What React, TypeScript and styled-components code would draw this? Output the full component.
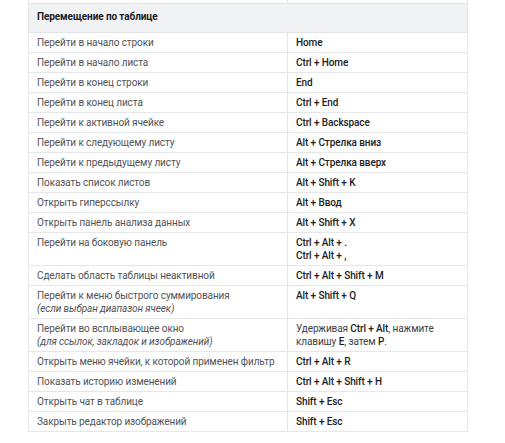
import * as React from "react";
import styled, { createGlobalStyle } from "styled-components";

const GlobalStyle = createGlobalStyle`
  html, body {
    margin: 0;
    padding: 0;
    background: #ffffff;
  }
  body {
    font-family: Roboto, "Liberation Sans", Arial, sans-serif;
  }
`;

type Part = { text: string; bold?: boolean };

interface IRow {
  action: string;
  note?: string;
  keys: Part[][];
}

const rows: IRow[] = [
  { action: "Перейти в начало строки", keys: [[{ text: "Home", bold: true }]] },
  { action: "Перейти в начало листа", keys: [[{ text: "Ctrl + Home", bold: true }]] },
  { action: "Перейти в конец строки", keys: [[{ text: "End", bold: true }]] },
  { action: "Перейти в конец листа", keys: [[{ text: "Ctrl + End", bold: true }]] },
  { action: "Перейти к активной ячейке", keys: [[{ text: "Ctrl + Backspace", bold: true }]] },
  { action: "Перейти к следующему листу", keys: [[{ text: "Alt + Стрелка вниз", bold: true }]] },
  { action: "Перейти к предыдущему листу", keys: [[{ text: "Alt + Стрелка вверх", bold: true }]] },
  { action: "Показать список листов", keys: [[{ text: "Alt + Shift + K", bold: true }]] },
  { action: "Открыть гиперссылку", keys: [[{ text: "Alt + Ввод", bold: true }]] },
  { action: "Открыть панель анализа данных", keys: [[{ text: "Alt + Shift + X", bold: true }]] },
  {
    action: "Перейти на боковую панель",
    keys: [[{ text: "Ctrl + Alt + .", bold: true }], [{ text: "Ctrl + Alt + ,", bold: true }]]
  },
  { action: "Сделать область таблицы неактивной", keys: [[{ text: "Ctrl + Alt + Shift + M", bold: true }]] },
  {
    action: "Перейти к меню быстрого суммирования",
    note: "(если выбран диапазон ячеек)",
    keys: [[{ text: "Alt + Shift + Q", bold: true }]]
  },
  {
    action: "Перейти во всплывающее окно",
    note: "(для ссылок, закладок и изображений)",
    keys: [
      [
        { text: "Удерживая " },
        { text: "Ctrl + Alt", bold: true },
        { text: ", нажмите" }
      ],
      [
        { text: "клавишу " },
        { text: "E", bold: true },
        { text: ", затем " },
        { text: "P", bold: true },
        { text: "." }
      ]
    ]
  },
  { action: "Открыть меню ячейки, к которой применен фильтр", keys: [[{ text: "Ctrl + Alt + R", bold: true }]] },
  { action: "Показать историю изменений", keys: [[{ text: "Ctrl + Alt + Shift + H", bold: true }]] },
  { action: "Открыть чат в таблице", keys: [[{ text: "Shift + Esc", bold: true }]] },
  { action: "Закрыть редактор изображений", keys: [[{ text: "Shift + Esc", bold: true }]] }
];

export default function App() {
  return (
    <Page>
      <GlobalStyle />
      <Table>
        <colgroup>
          <col style={{ width: 259 }} />
          <col style={{ width: 180 }} />
        </colgroup>
        <tbody>
          <StubRow>
            <StubCell />
            <StubCell />
          </StubRow>
          <tr>
            <HeadCell colSpan={2}>Перемещение по таблице</HeadCell>
          </tr>
          {rows.map((row, i) => (
            <tr key={i}>
              <Cell>
                {row.action}
                {row.note && <Note>{row.note}</Note>}
              </Cell>
              <KeyCell>
                {row.keys.map((line, j) => (
                  <Line key={j}>
                    {line.map((part, k) =>
                      part.bold ? <Key key={k}>{part.text}</Key> : <span key={k}>{part.text}</span>
                    )}
                  </Line>
                ))}
              </KeyCell>
            </tr>
          ))}
        </tbody>
      </Table>
    </Page>
  );
}

const Page = styled.div`
  padding: 0 0 0 28px;
  width: 505px;
  height: 443px;
  box-sizing: border-box;
  overflow: hidden;
`;

const Table = styled.table`
  border-collapse: collapse;
  table-layout: fixed;
  width: 440px;
  font-size: 10px;
  letter-spacing: -0.1px;
  line-height: 13px;
  color: #505357;
`;

const StubRow = styled.tr`
  height: 3px;
`;

const StubCell = styled.td`
  padding: 0;
  height: 2px;
  border: 1px solid #e3e4e6;
  border-top: none;
`;

const HeadCell = styled.td`
  background: #f1f2f4;
  font-weight: 700;
  color: #202124;
  padding: 6px 8px 9px 8px;
  height: 12px;
  border: 1px solid #e3e4e6;
`;

const Cell = styled.td`
  padding: 3px 8px 3px 8px;
  border: 1px solid #e6e7e9;
  vertical-align: top;
`;

const KeyCell = styled(Cell)`
  color: #3c4043;
`;

const Note = styled.i`
  display: block;
`;

const Line = styled.div``;

const Key = styled.b`
  font-weight: 500;
  color: #202124;
`;
